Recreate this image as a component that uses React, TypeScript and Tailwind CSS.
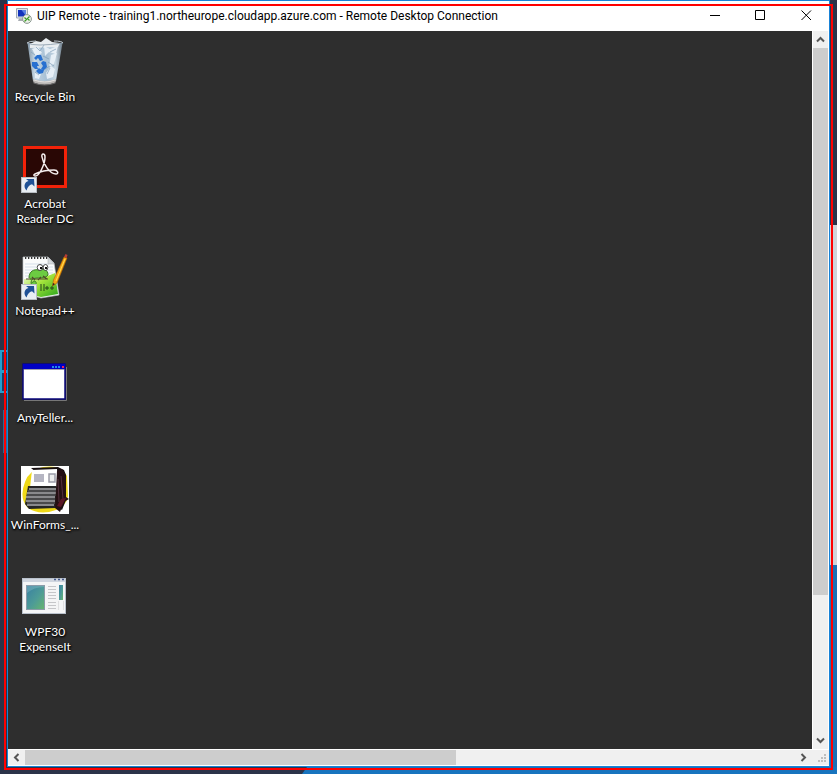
import type { ReactNode } from "react";

function Shortcut() {
  return (
    <g>
      <rect x="0.5" y="32.5" width="15" height="15" fill="#e9eef3" stroke="#b9bec4" />
      <path d="M5.500 45.500c-3.500-4-2-8.500 2-9.500l-2.500-2 8 0 .5 7.500-2.500-2.200c-3 .7-4.500 3-5.500 6.200z" fill="#1f5196" />
    </g>
  );
}

function RecycleIcon() {
  return (
    <svg width="48" height="48" viewBox="0 0 48 48" aria-hidden="true">
      <defs>
        <linearGradient id="bin" x1="0" x2="1">
          <stop offset="0" stopColor="#8395a5" />
          <stop offset="0.2" stopColor="#c3d5e3" />
          <stop offset="0.55" stopColor="#a6bfd4" />
          <stop offset="0.8" stopColor="#c5d5e1" />
          <stop offset="1" stopColor="#6b7a87" />
        </linearGradient>
      </defs>
      <path d="M6.500 5 12 43q12 5 23 0L41.500 5z" fill="url(#bin)" />
      <path d="m9 6 6-3 5 1 5-4 6 4 8 1-2 4-28 1z" fill="#e9edf0" />
      <path d="m11 11 6-2 4 6-6 3zm12-3 6 3 8-3-2 8-7-2-4 4zm7 9 6-2-3 11-5 3zM14 35l6 1-2 5-4-1zm11 0 5-7 4 3-2 8-6 2z" fill="#eff5fa" opacity=".85" />
      <path d="m15 9 4 4 4-6m6 7 6-3m-8 13 6 4m-19 6 4 3m8-1 3-6M10 14l4 3M22 18l6 3m-4 10 5-3" fill="none" stroke="#7f9db8" opacity=".7" />
      <path d="M12 41q12 4 23 0l-.5 3.500q-11 4.500-22 0z" fill="#b9b7b5" />
      <path d="M13 42q11 4 21 0" fill="none" stroke="#e4e3e2" />
      <path d="M12.500 45q11 4 22 0" fill="none" stroke="#69696a" />
      <path d="M6 5q8 4 36 0" fill="none" stroke="#8999a8" strokeWidth=".8" />
      <path d="M6 5q2-2 9-2m18 0q8 0 9 2" fill="none" stroke="#c2ccd4" />
      <path d="m13 20 3-3 4 0 2 5-3 1-2-3-2 2zm9 3 3 1 1 5-3 3-3-1 2-3-2-3zm-11 1 5 0 2 4-2 0 1 3-3 0-3-3zm7 6 1 1 4 1-1 3-4 1-3-3z" fill="#2870d0" />
    </svg>
  );
}

function AcrobatIcon() {
  return (
    <svg width="48" height="48" viewBox="0 0 48 48" aria-hidden="true">
      <rect x="3.500" y="2.500" width="41" height="39" fill="#290705" stroke="#f32209" strokeWidth="3" />
      <path d="M14 31c4 1 10-12 10-19 0-4-4-4-3 0 1 7 8 17 14 17 3 0 2-4-2-4-7 0-15 2-19 4-2 1-1 2 0 2z" fill="none" stroke="#f5eeee" strokeWidth="1.500" />
      <Shortcut />
    </svg>
  );
}

function NotepadIcon() {
  return (
    <svg width="48" height="48" viewBox="0 0 48 48" aria-hidden="true">
      <defs>
        <linearGradient id="grass" x1="0" x2="1" y1="0" y2="1">
          <stop offset="0" stopColor="#f6ffe0" />
          <stop offset="0.45" stopColor="#a3e33b" />
          <stop offset="1" stopColor="#28a51c" />
        </linearGradient>
      </defs>
      <path d="M2 5h25l6 6 5 32-18 3-18-5z" fill="#fafbfb" stroke="#bfc4c8" strokeWidth=".7" />
      <path d="M4 12h24M4 15h28M4 18h28M4 21h28M4 24h29" stroke="#c3d2e2" strokeWidth=".7" />
      <path d="M3 27q16 1 31-6l3 21-17 3-17-4z" fill="url(#grass)" />
      <path d="M4 6h23" stroke="#333" strokeWidth="2" strokeDasharray="1.300 1.700" />
      <path d="M27 5v7h6z" fill="#d5d9dc" stroke="#a4a9ad" strokeWidth=".5" />
      <path d="M8 26c0-7 5-9 10-8 5-2 9 0 9 5-2 3-7 3-11 3-6 0-7 5-5 7 3 2 6-2 3-4-2 0-3 1-2 2" fill="#6ccb42" stroke="#3c7c23" strokeWidth="1" />
      <path d="M5 27h22m-16-2 3 3m6-3-3 3m5-4 4 3" stroke="#51472b" strokeWidth="1.200" />
      <ellipse cx="19" cy="15.500" rx="2.800" ry="3" fill="#fff" stroke="#222" strokeWidth=".8" />
      <ellipse cx="24.500" cy="15.500" rx="2.300" ry="3" fill="#fff" stroke="#222" strokeWidth=".8" />
      <path d="M19 15h2v2h-2zm5 0h2v2h-2z" fill="#111" />
      <path d="M20 32v7m3-7v7m1-3h4m-2-2v4m3-2h4m-2-2v4" stroke="#244519" />
      <path d="m31.500 34 1-6 10.500-23 3 1-10 25z" fill="#f7a611" stroke="#ad6106" strokeWidth=".6" />
      <path d="m35 29 9-22" stroke="#ffdd58" />
      <path d="m43 5 1.500-3 2 1-1 3z" fill="#b93d32" />
      <path d="m31.500 34 .5-3 2 1z" fill="#332222" />
      <Shortcut />
    </svg>
  );
}

function TellerIcon() {
  return (
    <svg width="48" height="48" viewBox="0 0 48 48" aria-hidden="true">
      <path d="M3 41.500h42.500V8" fill="none" stroke="#777" />
      <rect x="2" y="5" width="42" height="35" fill="#fff" stroke="#09067c" strokeWidth="1.500" />
      <path d="M2 5h42v5H2z" fill="#0000c4" />
      <path d="M3 10.500h40" stroke="#a3a3b0" />
      <path d="M31 8h2m1 0h2m1 0h2" stroke="#208be8" strokeWidth="2" />
      <path d="M41 8h2" stroke="#ef2455" strokeWidth="2" />
    </svg>
  );
}

function WinFormsIcon() {
  return (
    <svg width="48" height="48" viewBox="0 0 48 48" aria-hidden="true">
      <rect width="48" height="48" fill="#fff" />
      <path d="M4 16Q8 4 22 1q18-3 24 9l1 20q-2 13-19 16-14 2-22-5-8-10-2-25z" fill="#efd918" />
      <path d="m10 2 27-1 6 3 2 5v25l-4 10-6-4-3-20z" fill="#160e10" />
      <path d="m11 4 25-1 1 19H9z" fill="#fff" />
      <path d="M13 8h10v8H13z" fill="#b5b5c2" />
      <path d="M28 8h6v8h-6z" fill="#eeeeee" stroke="#9c9ca8" strokeWidth="1.500" />
      <path d="M7 20h28l3 3-3 19-27 1-4-5z" fill="#252526" />
      <path d="m8 23 27 0M6 27h29M5 31h29M5 35h29M6 39h27" stroke="#aaaaaf" strokeWidth="1.700" />
      <path d="M7 25h28M6 29h29M5 33h29M6 37h28" stroke="#555558" strokeWidth="1.500" />
      <path d="m36 5 5-2 4 7v21l3 2-5 3-4 10-5-4z" fill="#251013" />
      <path d="m40 10 2 23m-5-20 1 23" stroke="#52303c" />
      <path d="m40 33 5-1-5 9-4-1z" fill="#5b1725" />
    </svg>
  );
}

function WpfIcon() {
  return (
    <svg width="48" height="48" viewBox="0 0 48 48" aria-hidden="true">
      <defs>
        <linearGradient id="screen" x1="0" x2="1" y1="0" y2="1">
          <stop offset="0" stopColor="#397fa2" />
          <stop offset=".55" stopColor="#4d9b97" />
          <stop offset="1" stopColor="#67b66d" />
        </linearGradient>
      </defs>
      <rect x="1.500" y="5.500" width="43" height="35" fill="#f4f5f6" stroke="#b9c1cc" />
      <path d="M2 6h42v3H2z" fill="#cfd5df" />
      <path d="M33 6.500h2m2 0h2m2 0h2" stroke="#465a8d" strokeWidth="1.500" />
      <rect x="5.500" y="12.500" width="18" height="24" fill="url(#screen)" stroke="#8a9aa8" />
      <path d="M6 20q7-6 17-6v-1H6z" fill="#a6d2d6" opacity=".3" />
      <path d="M27 13.500h8m-8 3h8m-8 3h8m-8 3h8m-8 3h8m-8 4h8m-8 3h8m-8 3h8" stroke="#c5c6c9" />
      <rect x="38" y="12" width="4" height="15" fill="url(#screen)" />
      <path d="M37.500 28v9m5-9v9" stroke="#dedfe1" />
    </svg>
  );
}

const items: { name: string; icon: ReactNode }[] = [
  { name: "Recycle Bin", icon: <RecycleIcon /> },
  { name: "Acrobat Reader DC", icon: <AcrobatIcon /> },
  { name: "Notepad++", icon: <NotepadIcon /> },
  { name: "AnyTeller...", icon: <TellerIcon /> },
  { name: "WinForms_...", icon: <WinFormsIcon /> },
  { name: "WPF30 ExpenseIt", icon: <WpfIcon /> },
];

function RemoteIcon() {
  return (
    <svg width="16" height="16" viewBox="0 0 16 16" aria-hidden="true">
      <path d="M.500.500h11v9.500H.500z" fill="#e0e5ec" stroke="#a0a9b5" />
      <path d="M2 2h8v6.500H2z" fill="#1232bd" />
      <path d="M5.500 2H10v6z" fill="#5c82e2" />
      <path d="M3 10.500h4v2.500H2z" fill="#a8adb3" />
      <circle cx="11" cy="11" r="4.400" fill="#edf0e9" stroke="#8f9b94" />
      <path d="m8.500 9.500 2 2-2 2m5-5-2 2 2 2" fill="none" stroke="#3e9c28" strokeWidth="1.300" />
    </svg>
  );
}

const rotations = { up: "rotate-0", right: "rotate-90", down: "rotate-180", left: "-rotate-90" };

function ScrollButton({ direction }: { direction: keyof typeof rotations }) {
  return (
    <button aria-label={`Scroll ${direction}`} className="flex size-[17px] shrink-0 items-center justify-center">
      <svg width="9" height="9" viewBox="0 0 9 9" className={rotations[direction]} aria-hidden="true">
        <path d="M1 6.500 4.500 3 8 6.500" fill="none" stroke="#555" strokeWidth="2" />
      </svg>
    </button>
  );
}

function Wallpaper() {
  return (
    <div className="absolute inset-0 overflow-hidden bg-[#2b3349]" aria-hidden="true">
      <div className="absolute right-0 bottom-0 h-[209px] w-2 bg-[#1d70b4]" />
      <div className="absolute top-[225px] right-0 bottom-[209px] w-2 bg-[#d0d4d8]" />
      <div className="absolute right-0 bottom-0 left-[302px] h-[7px] bg-[#1874be] [clip-path:polygon(5px_0,100%_0,100%_100%,0_100%)]" />
      <div className="absolute top-[350px] left-0 h-[22px] w-3 border-2 border-[#249dcd] bg-[#193e68]" />
      <div className="absolute top-[371px] left-0 h-[22px] w-3 border-2 border-[#249dcd] bg-[#193e68]" />
      <div className="absolute top-[410px] left-[3px] h-[43px] w-1 bg-[#286a96]" />
    </div>
  );
}

export default function App() {
  return (
    <div className="relative flex h-screen px-[7px] pb-[7px] font-[Lato,'Open_Sans',sans-serif] text-xs text-black">
      <Wallpaper />
      <main className="relative flex min-w-0 flex-1 flex-col border border-[#1883d7] bg-white">
        <header className="flex h-[30px] shrink-0 items-center pl-2">
          <RemoteIcon />
          <h1 className="ml-[5px] flex-1 truncate font-[Roboto,'Open_Sans',sans-serif] leading-4">
            UIP Remote - training1.northeurope.cloudapp.azure.com - Remote Desktop Connection
          </h1>
          <div className="flex h-[28px] self-start">
            <button aria-label="Minimize" className="flex w-[46px] items-center justify-center">
              <svg width="11" height="11" viewBox="0 0 11 11" aria-hidden="true"><path d="M0 5.500h10" stroke="#000" /></svg>
            </button>
            <button aria-label="Maximize" className="flex w-[45px] items-center justify-center">
              <svg width="11" height="11" viewBox="0 0 11 11" aria-hidden="true"><path d="M.5.5h9v9h-9z" fill="none" stroke="#000" /></svg>
            </button>
            <button aria-label="Close" className="flex w-[46px] items-center justify-center">
              <svg width="11" height="11" viewBox="0 0 11 11" aria-hidden="true"><path d="m.5.5 9.500 9.500m0-9.500-9.500 9.500" stroke="#000" /></svg>
            </button>
          </div>
        </header>
        <div className="flex min-h-0 flex-1">
          <section aria-label="Remote desktop" className="min-w-0 flex-1 bg-[#2e2e2e] pt-[7px]">
            {items.map((item) => (
              <button
                key={item.name}
                className="flex h-[107px] w-[74px] flex-col items-center gap-[3px] leading-[15px] text-white [text-shadow:1px_1px_2px_#000,0_1px_2px_#000]"
              >
                {item.icon}
                <span className="block text-center">{item.name}</span>
              </button>
            ))}
          </section>
          <div className="flex w-[17px] shrink-0 flex-col border-x border-white bg-[#f0f0f0]">
            <div className="flex w-full justify-center"><ScrollButton direction="up" /></div>
            <div className="min-h-0 flex-1"><div className="h-4/5 bg-[#cdcdcd]" /></div>
            <div className="flex w-full justify-center"><ScrollButton direction="down" /></div>
          </div>
        </div>
        <div className="flex h-[17px] shrink-0 items-center border-y border-white bg-[#f0f0f0]">
          <ScrollButton direction="left" />
          <div className="h-full flex-1"><div className="h-full w-[56%] bg-[#cdcdcd]" /></div>
          <ScrollButton direction="right" />
          <div className="flex h-full w-[17px] items-end justify-end">
            <svg width="12" height="12" viewBox="0 0 12 12" aria-hidden="true">
              <path d="M7 1h2v2H7zM4 4h2v2H4zm3 0h2v2H7zM1 7h2v2H1zm3 0h2v2H4zm3 0h2v2H7z" fill="#bdbdbd" />
            </svg>
          </div>
        </div>
      </main>
      <div className="pointer-events-none absolute top-1 right-1 bottom-1 left-1 border-2 border-[#ff0000]" aria-hidden="true" />
    </div>
  );
}
